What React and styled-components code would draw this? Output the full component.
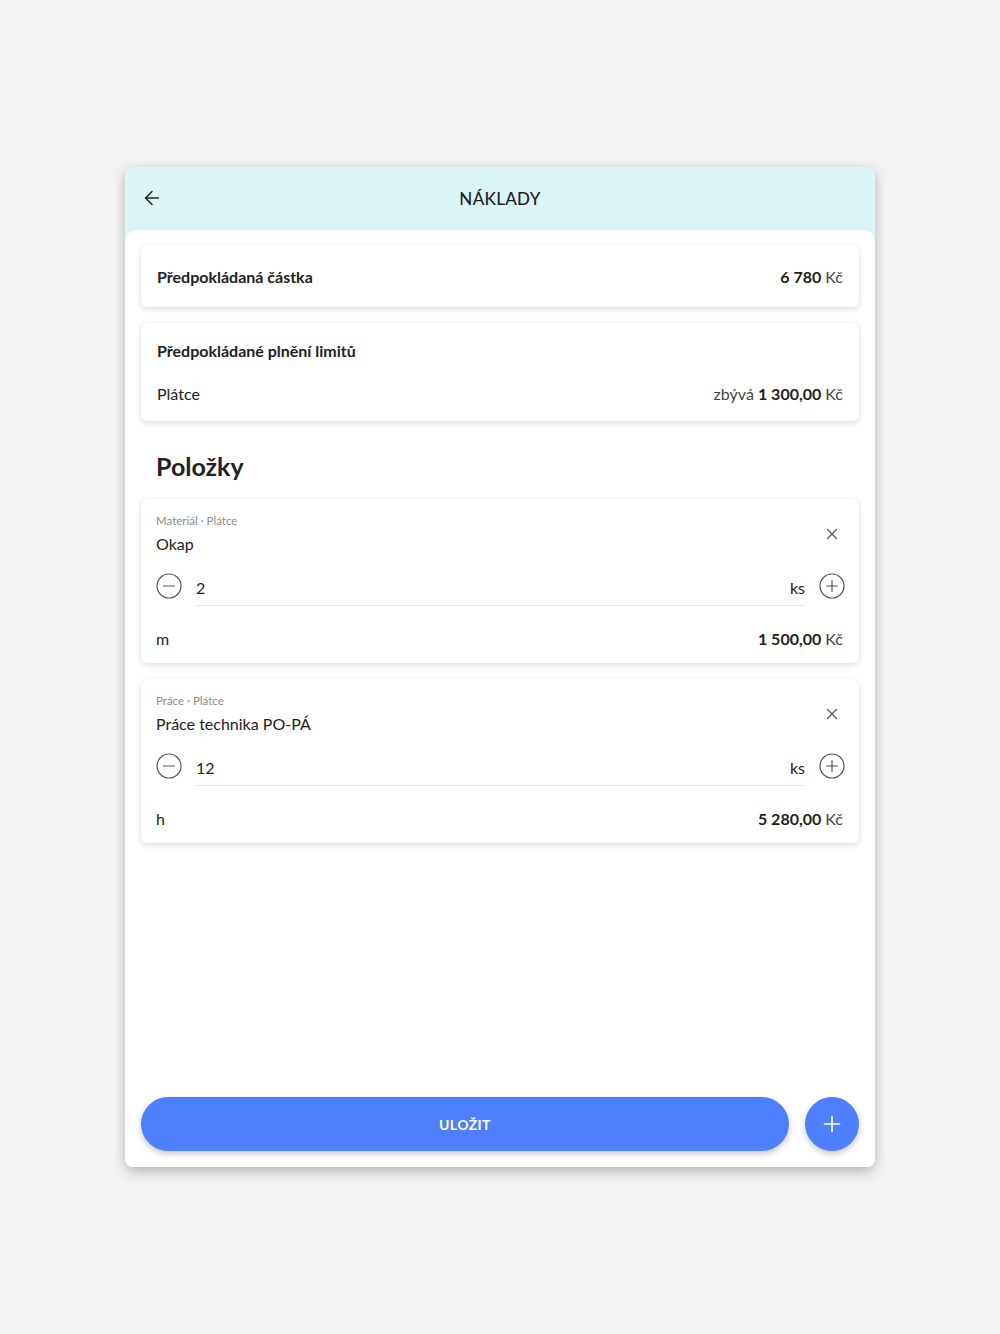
import React from 'react';
import styled, { createGlobalStyle } from 'styled-components';
import { ArrowLeft, Plus } from 'lucide-react';

const GlobalStyle = createGlobalStyle`
  html, body {
    margin: 0;
    padding: 0;
    background: #f4f4f4;
  }
  body {
    font-family: Lato, 'Noto Sans', sans-serif;
    color: #222;
  }
  * { box-sizing: border-box; }
`;

const Page = styled.div`
  width: 1000px;
  height: 1334px;
  display: flex;
  justify-content: center;
  padding-top: 167px;
`;

const Frame = styled.div`
  width: 750px;
  height: 1000px;
  background: #dbf4f5;
  border-radius: 8px;
  box-shadow: 0 4px 14px rgba(0, 0, 0, 0.28);
  display: flex;
  flex-direction: column;
  overflow: hidden;
`;

const Header = styled.header`
  height: 63px;
  flex-shrink: 0;
  display: flex;
  align-items: center;
  justify-content: center;
  position: relative;
`;

const BackButton = styled.button`
  position: absolute;
  left: 16px;
  top: 20px;
  border: none;
  background: none;
  padding: 0;
  display: flex;
  color: #222;
`;

const Title = styled.h1`
  margin: 0;
  font-size: 17px;
  font-weight: 500;
  letter-spacing: 0.3px;
  line-height: 60px;
`;

const Body = styled.main`
  flex: 1;
  background: #fff;
  border-radius: 12px 12px 0 0;
  display: flex;
  flex-direction: column;
  padding: 15px 16px 16px;
`;

const Content = styled.div`
  flex: 1;
  display: flex;
  flex-direction: column;
  gap: 16px;
`;

const Card = styled.section`
  background: #fff;
  border-radius: 6px;
  box-shadow: 0 2px 6px rgba(0, 0, 0, 0.13), 0 0 1px rgba(0, 0, 0, 0.08);
  padding: ${p => p.$pad || '0 16px'};
`;

const Row = styled.div`
  display: flex;
  align-items: center;
  justify-content: space-between;
  height: ${p => p.$h || '22px'};
  margin-top: ${p => p.$mt || '0'};
`;

const StrongLabel = styled.span`
  font-size: 16px;
  font-weight: 700;
`;

const Label = styled.span`
  font-size: 16px;
`;

const Amount = styled.span`
  font-size: 16px;
  color: #444;
  b {
    color: #222;
    font-weight: 700;
  }
`;

const SectionTitle = styled.h2`
  margin: 14px 0 2px;
  padding-left: 15px;
  font-size: 25px;
  line-height: 30px;
  font-weight: 700;
`;

const ItemHead = styled.div`
  display: flex;
  align-items: center;
  justify-content: space-between;
`;

const Meta = styled.div`
  font-size: 11.5px;
  line-height: 14px;
  color: #8c8c8c;
`;

const Name = styled.div`
  font-size: 16px;
  line-height: 20px;
  margin-top: 6px;
`;

const IconButton = styled.button`
  border: none;
  background: none;
  padding: 0;
  display: flex;
  color: #555;
  margin-right: ${p => p.$mr || '0'};
`;

const Stepper = styled.div`
  display: flex;
  align-items: flex-start;
  gap: 14px;
  margin-top: 19px;
`;

const QtyField = styled.div`
  flex: 1;
  display: flex;
  align-items: flex-end;
  justify-content: space-between;
  height: 33px;
  padding-bottom: 6px;
  border-bottom: 1px solid #e6e6e6;
  font-size: 16px;
  line-height: 22px;
`;

const Footer = styled.div`
  display: flex;
  align-items: center;
  gap: 16px;
`;

const SaveButton = styled.button`
  flex: 1;
  height: 54px;
  border: none;
  border-radius: 27px;
  background: #4d7ffe;
  color: #fff;
  font-family: inherit;
  font-size: 14px;
  font-weight: 700;
  letter-spacing: 0.4px;
  box-shadow: 0 3px 6px rgba(0, 0, 0, 0.22);
`;

const Fab = styled.button`
  width: 54px;
  height: 54px;
  border: none;
  border-radius: 50%;
  background: #4d7ffe;
  color: #fff;
  display: flex;
  align-items: center;
  justify-content: center;
  box-shadow: 0 3px 6px rgba(0, 0, 0, 0.22);
`;

const StepIcon = ({ plus }) => (
  <svg width="26" height="26" viewBox="0 0 26 26" fill="none" stroke="currentColor" strokeWidth="1.2" strokeLinecap="round">
    <circle cx="13" cy="13" r="12" />
    <path d="M7.5 13h11" />
    {plus && <path d="M13 7.5v11" />}
  </svg>
);

const CloseIcon = () => (
  <svg width="14" height="14" viewBox="0 0 14 14" fill="none" stroke="currentColor" strokeWidth="1.2" strokeLinecap="round">
    <path d="M2.5 2.5l9 9M11.5 2.5l-9 9" />
  </svg>
);

const items = [
  { meta: 'Materiál · Plátce', name: 'Okap', qty: '2', unit: 'm', price: '1 500,00' },
  { meta: 'Práce · Plátce', name: 'Práce technika PO-PÁ', qty: '12', unit: 'h', price: '5 280,00' },
];

const Item = ({ item }) => (
  <Card $pad="15px 16px 14px 15px">
    <ItemHead>
      <div>
        <Meta>{item.meta}</Meta>
        <Name>{item.name}</Name>
      </div>
      <IconButton $mr="4px"><CloseIcon /></IconButton>
    </ItemHead>
    <Stepper>
      <IconButton><StepIcon /></IconButton>
      <QtyField>
        <span>{item.qty}</span>
        <span>ks</span>
      </QtyField>
      <IconButton $mr="-2px"><StepIcon plus /></IconButton>
    </Stepper>
    <Row $mt="21px">
      <Label>{item.unit}</Label>
      <Amount><b>{item.price}</b> Kč</Amount>
    </Row>
  </Card>
);

export default function App() {
  return (
    <Page>
      <GlobalStyle />
      <Frame>
        <Header>
          <BackButton><ArrowLeft size={22} strokeWidth={1.6} /></BackButton>
          <Title>NÁKLADY</Title>
        </Header>
        <Body>
          <Content>
            <Card>
              <Row $h="62px">
                <StrongLabel>Předpokládaná částka</StrongLabel>
                <Amount><b>6 780</b> Kč</Amount>
              </Row>
            </Card>
            <Card $pad="16px 16px 17px">
              <Row><StrongLabel>Předpokládané plnění limitů</StrongLabel></Row>
              <Row $mt="21px">
                <Label>Plátce</Label>
                <Amount>zbývá <b>1 300,00</b> Kč</Amount>
              </Row>
            </Card>
            <SectionTitle>Položky</SectionTitle>
            {items.map(it => <Item key={it.name} item={it} />)}
          </Content>
          <Footer>
            <SaveButton>ULOŽIT</SaveButton>
            <Fab><Plus size={26} strokeWidth={1.5} /></Fab>
          </Footer>
        </Body>
      </Frame>
    </Page>
  );
}
